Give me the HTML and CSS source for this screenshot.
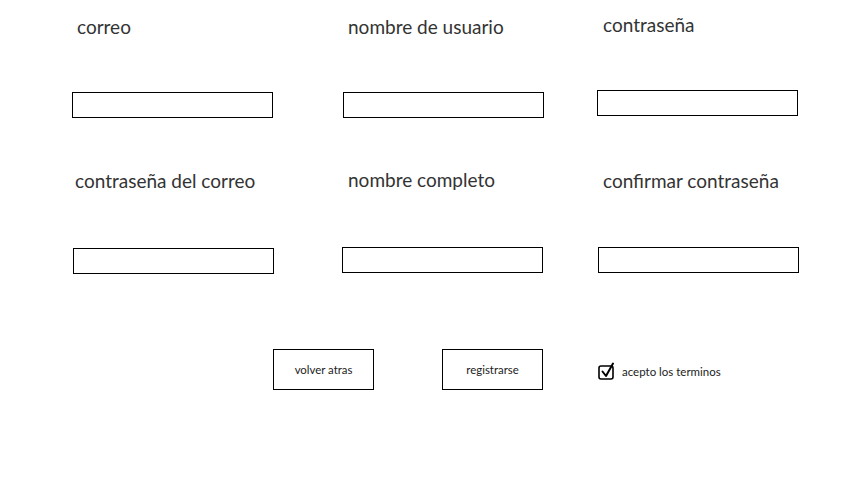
FILE: index.html
```html
<!DOCTYPE html>
<html lang="es">
<head>
<meta charset="utf-8">
<title>Registro</title>
<link rel="stylesheet" href="styles.css">
</head>
<body>
<main class="page">
  <section class="fields">
    <div class="field f1"><span class="label">correo</span><div class="input"></div></div>
    <div class="field f2"><span class="label">nombre de usuario</span><div class="input"></div></div>
    <div class="field f3"><span class="label">contraseña</span><div class="input"></div></div>
    <div class="field f4"><span class="label">contraseña del correo</span><div class="input"></div></div>
    <div class="field f5"><span class="label">nombre completo</span><div class="input"></div></div>
    <div class="field f6"><span class="label">confirmar contraseña</span><div class="input"></div></div>
  </section>
  <section class="actions">
    <button class="btn back">volver atras</button>
    <button class="btn register">registrarse</button>
    <label class="terms">
      <svg class="check" width="18" height="18" viewBox="0 0 18 18">
        <rect x="1" y="4" width="14" height="13" rx="2" fill="none" stroke="#000" stroke-width="1.6"/>
        <path d="M4.5 9.5 L8 14 L15 1.5" fill="none" stroke="#000" stroke-width="2" stroke-linecap="round" stroke-linejoin="round"/>
      </svg>
      <span>acepto los terminos</span>
    </label>
  </section>
</main>
</body>
</html>
```

FILE: styles.css
```css
* { box-sizing: border-box; }
html, body { margin: 0; padding: 0; background: #fff; }
body {
  font-family: Lato, "Open Sans", sans-serif;
  color: #333;
  width: 848px;
  height: 500px;
  overflow: hidden;
}
.page { padding: 15px 0 0 72px; }
.fields {
  display: grid;
  grid-template-columns: 270px 255px 202px;
  row-gap: 52px;
}
.field { display: flex; flex-direction: column; }
.label {
  font-size: 19px;
  line-height: 24px;
  height: 77px;
  padding-left: 5px;
}
.input {
  width: 201px;
  height: 26px;
  border: 1px solid #000;
  background: #fff;
}
.f2 { padding-left: 1px; }
.f3 { margin-top: -2px; }
.f3 .label { padding-left: 6px; }
.f4 .label { padding-left: 2px; height: 79px; }
.f4 { padding-left: 1px; margin-top: -1px; }
.f5 .label { padding-left: 6px; height: 79px; }
.f5 { margin-top: -2px; }
.f6 { padding-left: 1px; margin-top: -1px; }
.f6 .label { padding-left: 5px; height: 78px; }

.actions {
  display: flex;
  align-items: center;
  padding: 75px 0 0 201px;
}
.btn {
  font-family: Lato, "Open Sans", sans-serif;
  font-size: 11.4px;
  color: #222;
  width: 101px;
  height: 41px;
  border: 1px solid #000;
  background: #fff;
  padding: 0;
}
.register { margin-left: 68px; }
.terms {
  display: flex;
  align-items: center;
  gap: 6px;
  margin-left: 55px;
  margin-top: 3px;
  font-size: 11.5px;
  color: #222;
}
.check { display: block; }
```
